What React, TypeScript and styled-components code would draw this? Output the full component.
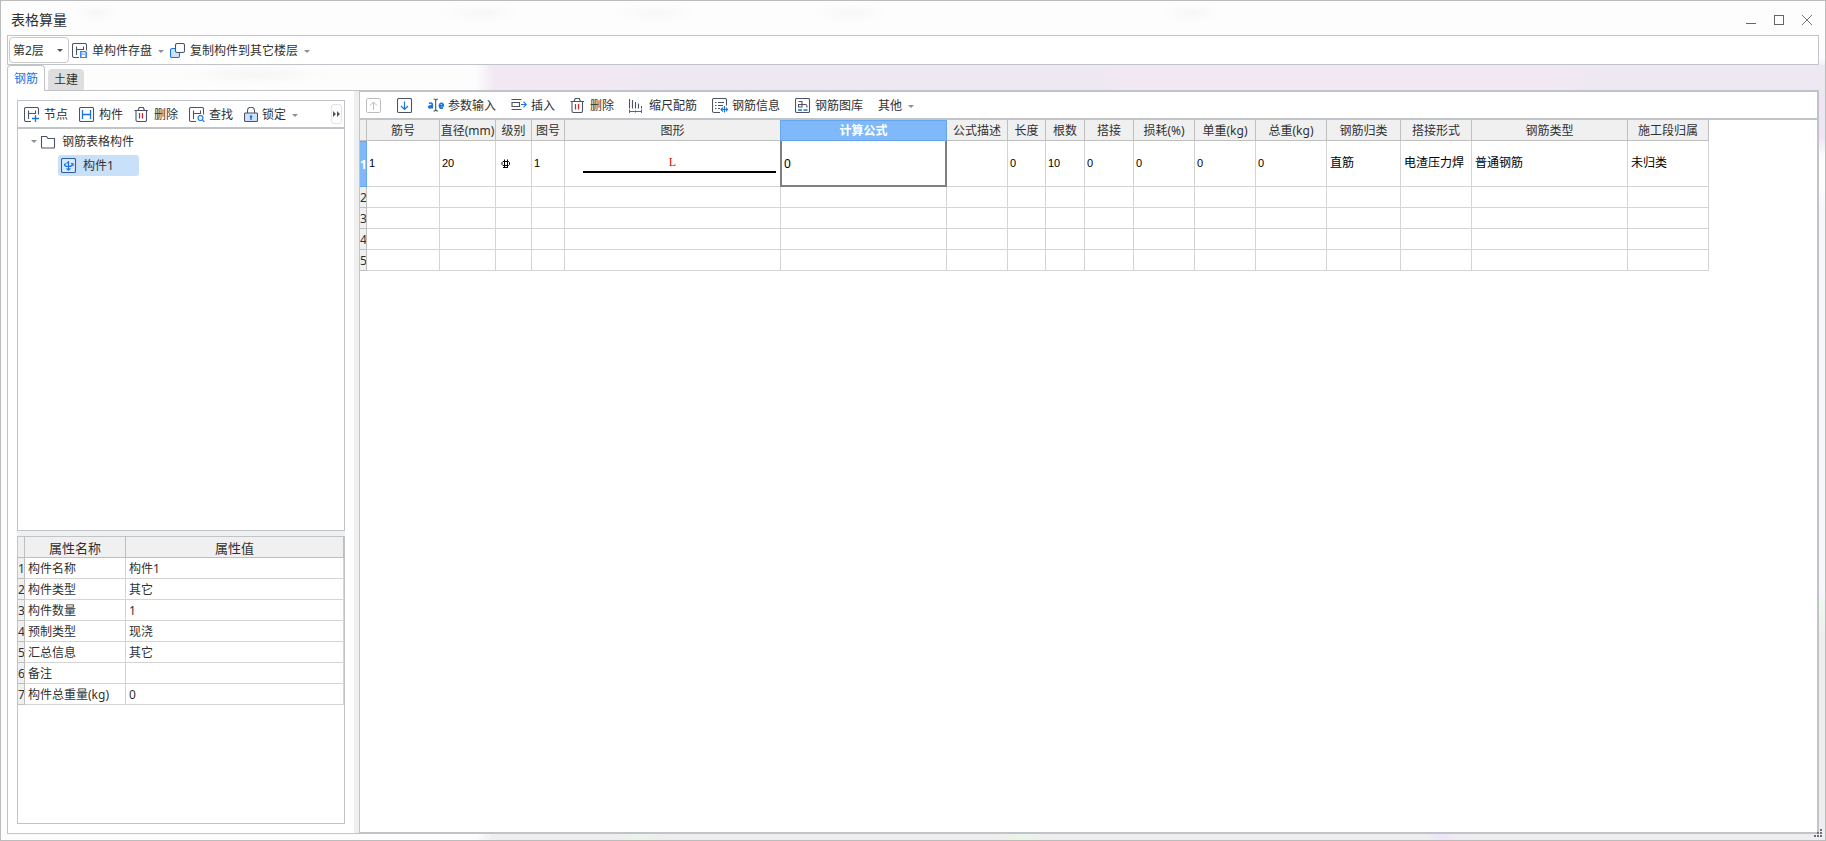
import React from "react";
import styled, { createGlobalStyle, css } from "styled-components";

const INK = "#4b5466";
const BLUE = "#1a73e0";
const EDGE = "#c0c3c8";
const GRID = "#d4d4d4";
const HEAD = "#f0f0f0";

const GlobalStyle = createGlobalStyle`
  *, *::before, *::after { box-sizing: border-box; }
  html, body { margin: 0; }
  body {
    color: #303133;
    background: #fff;
    font: 12px/16px "Noto Sans", "Noto Sans CJK SC", sans-serif;
  }
  button, select, input { font: inherit; color: inherit; margin: 0; }
`;

const Window = styled.div`
  position: relative;
  display: flex;
  flex-direction: column;
  min-height: 100vh;
  padding: 0 6px 6px;
  border: 1px solid #bcbcbc;
  background:
    linear-gradient(#ede6f2 0 44px, #fdfdfd 64px 90px, #f9f3fc 120px 500px, #ebf8eb 516px, #eeeeee 540px)
      right 0 top 92px / 6px 100% no-repeat,
    linear-gradient(90deg, #fdfdfd 26%, #eeeeee 27% 34%, #e8f6e8 35%, #eeeeee 36% 55%, #e8f6e8 56%, #eeeeee 57% 78%, #efe4fa 79%, #eeeeee 80%)
      0 100% / 100% 6px no-repeat,
    linear-gradient(90deg, transparent 26%, #f2e8f4 27% 33%, #eee8f2 36% 60%, #f2e8f4 62% 84%, #eee8f2 88%)
      0 64px / 100% 28px no-repeat,
    linear-gradient(#fdfdfd 0 56px, #f3eef6 64px 92px, transparent 92px) right 0 top 0 / 6px 92px no-repeat,
    radial-gradient(closest-side, #f6f6f7, transparent) 180px 62px / 150px 22px no-repeat,
    radial-gradient(closest-side, #f7f7f7, transparent) 70px 2px / 50px 20px no-repeat,
    radial-gradient(closest-side, #f7f7f7, transparent) 440px 2px / 80px 20px no-repeat,
    radial-gradient(closest-side, #f7f7f7, transparent) 615px 2px / 80px 20px no-repeat,
    radial-gradient(closest-side, #f7f7f7, transparent) 810px 2px / 80px 20px no-repeat,
    radial-gradient(closest-side, #f7f7f7, transparent) 1160px 2px / 60px 20px no-repeat,
    #fdfdfd;
`;

const TitleBar = styled.header`
  display: flex;
  align-items: center;
  justify-content: space-between;
  height: 34px;
  padding: 0 4px;
`;

const Title = styled.h1`
  margin: 0;
  padding-top: 4px;
  font-size: 14px;
  line-height: 20px;
  font-weight: 400;
`;

const WindowButtons = styled.div`
  display: flex;
  gap: 12px;
  padding-top: 4px;
`;

const WindowButton = styled.button`
  display: flex;
  padding: 0;
  border: 0;
  background: none;
`;

const FloorPicker = styled.label`
  position: relative;
  display: flex;
  margin-right: 3px;
`;

const FloorSelect = styled.select`
  appearance: none;
  width: 60px;
  height: 26px;
  padding: 1px 0 0 3px;
  border: 1px solid #c9c9c9;
  border-radius: 4px;
  background: #fff;
  outline: none;
`;

const Caret = styled.span<{ $dark?: boolean }>`
  border: 3px solid transparent;
  border-top-color: ${(p) => (p.$dark ? "#555" : "#8f8f8f")};
  border-bottom: 0;
`;

const PickerCaret = styled(Caret)`
  position: absolute;
  right: 6px;
  top: 12px;
  pointer-events: none;
`;

const ToolButton = styled.button`
  display: flex;
  align-items: center;
  gap: 4px;
  flex: none;
  padding: 2px 0 0;
  border: 0;
  background: none;
  white-space: nowrap;

  svg { flex: none; }
  ${Caret} { margin-left: 2px; }
`;

const MainToolbar = styled.div`
  display: flex;
  align-items: center;
  height: 30px;
  padding: 0 1px;
  border: 1px solid ${EDGE};
  background: #fff;

  ${ToolButton} + ${ToolButton} { margin-left: 6px; }
`;

const TabStrip = styled.div`
  display: flex;
  align-items: flex-end;
  gap: 3px;
  height: 25px;
`;

const Tab = styled.button<{ $active?: boolean }>`
  padding: 1px 6px 0;
  border: 0;
  border-radius: 4px 4px 0 0;
  height: 21px;
  background: #dedede;
  ${(p) =>
    p.$active &&
    css`
      position: relative;
      height: 26px;
      margin-bottom: -1px;
      border: 1px solid ${EDGE};
      border-bottom: 0;
      background: #fff;
      color: ${BLUE};
    `}
`;

const Body = styled.main`
  display: flex;
  flex: 1;
  min-height: 0;
`;

const Side = styled.aside`
  display: flex;
  flex-direction: column;
  flex: none;
  width: 347px;
  padding: 9px;
  border: solid ${EDGE};
  border-width: 1px 0 1px 1px;
  background: #fff;
`;

const Splitter = styled.div`
  flex: none;
  width: 5px;
  border: solid ${EDGE};
  border-width: 1px 0;
  background: #efefef;
`;

const SideToolbar = styled.div`
  display: flex;
  align-items: center;
  gap: 11px;
  height: 29px;
  padding: 0 2px 0 6px;
  border: 1px solid ${EDGE};
  border-bottom-width: 2px;
`;

const MoreButton = styled.button`
  display: flex;
  align-items: center;
  justify-content: center;
  width: 11px;
  height: 20px;
  margin-left: auto;
  padding: 0;
  border: 1px solid #e3e3e8;
  border-radius: 3px;
  background: #fff;
`;

const Tree = styled.ul`
  flex: 402 1 0;
  margin: 0;
  padding: 2px 13px;
  list-style: none;
  border: 1px solid ${EDGE};
  border-top: 0;

  ul { margin: 0; padding: 3px 0 0 27px; list-style: none; }
`;

const TreeNode = styled.div<{ $selected?: boolean }>`
  display: flex;
  align-items: center;
  gap: 6px;
  height: 21px;
  ${(p) =>
    p.$selected &&
    css`
      width: 81px;
      padding-left: 3px;
      border-radius: 3px;
      background: #c9e0fb;
    `}

  ${Caret} { margin-right: -3px; }
`;

const SideGap = styled.div`
  height: 5px;
  background: ${HEAD};
`;

const PropertyPanel = styled.section`
  flex: 290 1 0;
  border: 1px solid ${EDGE};
`;

const Grid = styled.table`
  table-layout: fixed;
  border-collapse: separate;
  border-spacing: 0;

  th, td {
    height: 21px;
    padding: 2px 0 0;
    overflow: hidden;
    border: solid ${GRID};
    border-width: 0 1px 1px 0;
    text-align: left;
    font-weight: 400;
    white-space: nowrap;
  }
  th {
    border-color: #bfbfbf;
    background: ${HEAD};
    text-align: center;
  }
  td { padding-left: 3px; }
`;

const PropertyGrid = styled(Grid)`
  width: 100%;
  thead th { font-size: 13px; }
`;

const Main = styled.section`
  display: flex;
  flex-direction: column;
  flex: 1;
  min-width: 0;
  border: 2px solid ${EDGE};
  border-left-width: 1px;
  background: #fff;
`;

const RebarToolbar = styled.div`
  display: flex;
  align-items: center;
  gap: 15px;
  height: 28px;
  padding: 0 6px;
  border-bottom: 2px solid ${EDGE};
`;

const GridScroll = styled.div`
  flex: 1;
  overflow: auto;
`;

const RebarGrid = styled(Grid)`
  width: 1349px;
`;

const HeadCell = styled.th<{ $active?: boolean }>`
  ${(p) =>
    p.$active &&
    css`
      &&& {
        background: #80b9fa;
        border-color: #66a6ee;
        color: #fff;
        font-weight: 700;
        box-shadow: -1px 0 0 #66a6ee, inset 0 1px 0 #66a6ee;
      }
    `}
`;

const DataCell = styled.td<{ $numeric?: boolean; $editing?: boolean }>`
  &&& {
    height: 46px;
    color: #000;
    font-family: "Liberation Sans", "Noto Sans CJK SC", sans-serif;
    font-size: ${(p) => (p.$numeric ? 11 : 12)}px;
    padding: 0 0 2px ${(p) => (p.$numeric ? 2 : 3)}px;
  }
  svg { display: block; margin: 2px 0 0 2px; }
  ${(p) =>
    p.$editing &&
    css`
      &&& {
        padding: 0 0 0 2px;
        overflow: visible;
        border: solid #7f7f7f;
        border-width: 0 2px 2px 1px;
        box-shadow: -1px 0 0 #7f7f7f;
      }
    `}
`;

const FormulaInput = styled.input`
  display: block;
  width: 100%;
  height: 20px;
  padding: 0;
  border: 0;
  outline: 0;
  background: none;
  font-family: "Noto Sans", sans-serif;
  font-size: 12px;
`;

const ShapeCell = styled(DataCell)`
  &&& { padding: 0 4px 0 0; text-align: center; }
`;

const ShapeLabel = styled.div`
  padding-left: 4px;
  color: #f00000;
  font-family: "Liberation Serif", serif;
  font-size: 12px;
  line-height: 14px;
`;

const ShapeBar = styled.div`
  height: 2px;
  margin: 2px 0 0 18px;
  background: #000;
`;

const Grip = styled.svg`
  position: absolute;
  right: 3px;
  bottom: 3px;
`;

const Svg = ({ children }: { children: React.ReactNode }) => (
  <svg width="16" height="16" viewBox="0 0 16 16" fill="none" stroke={INK} strokeWidth="1.1" aria-hidden="true">
    {children}
  </svg>
);

const OpenFrame = () => (
  <path d="M14.500 7.500V2A1.500 1.500 0 0 0 13 .5H2A1.500 1.500 0 0 0 .5 2v11A1.500 1.500 0 0 0 2 14.500h5M4.500 3.500v8.500M11.500 3.500v3.500M4.500 6.500h7" />
);

const SaveIcon = () => (
  <Svg>
    <OpenFrame />
    <path d="M8.500 8.500h5l1 1v5h-6z" fill="#8db9f5" stroke="#3f86e8" />
    <path d="M10 12h3v2h-3zM10 9.500h3v1h-3z" fill="#fff" stroke="none" />
  </Svg>
);
const CopyIcon = () => (
  <Svg>
    <rect x=".5" y="5.500" width="9" height="9" rx="1.600" fill="#cfe2fb" stroke={BLUE} />
    <rect x="5.500" y=".5" width="9" height="9" rx="1.600" fill="#fff" />
  </Svg>
);
const NodeIcon = () => (
  <Svg>
    <OpenFrame />
    <path d="M11.500 8v7M8 11.500h7" stroke={BLUE} strokeWidth="1.300" />
  </Svg>
);
const MemberIcon = () => (
  <Svg>
    <rect x=".5" y=".5" width="14" height="14" rx="1.300" />
    <path d="M3.500 3v9M11.500 3v9M3.500 7.500h8" stroke={BLUE} strokeWidth="1.300" />
  </Svg>
);
const TrashIcon = () => (
  <Svg>
    <path d="M.5 3.500h13.500M4 3.500L5.200.5h4.100l1.200 3M2 3.500V13a1.500 1.500 0 0 0 1.500 1.500H11a1.500 1.500 0 0 0 1.500-1.500V3.500" />
    <path d="M5.500 6v5.500M8.500 6v5.500" stroke="#e02020" strokeWidth="1.200" />
  </Svg>
);
const FindIcon = () => (
  <Svg>
    <OpenFrame />
    <circle cx="11.500" cy="11" r="2.500" stroke={BLUE} fill="#e6f0fd" />
    <path d="M13.400 12.900l2 2" stroke={BLUE} />
  </Svg>
);
const LockIcon = () => (
  <svg width="14" height="16" viewBox="0 0 14 16" fill="none" stroke={INK} strokeWidth="1.1" aria-hidden="true">
    <path d="M3.500 6V3.800a3.300 3.300 0 0 1 7 0V6" />
    <rect x=".5" y="6" width="13" height="8.500" rx="1" fill="#cfe2fb" />
    <path d="M7 9.500v3.500" stroke={BLUE} strokeWidth="1.400" />
    <circle cx="7" cy="9.500" r="1.300" fill={BLUE} stroke="none" />
  </svg>
);
const UpIcon = () => (
  <svg width="16" height="16" viewBox="0 0 16 16" fill="none" stroke="#bdbdbd" aria-hidden="true">
    <rect x=".5" y=".5" width="14" height="14" rx="1.300" />
    <path d="M7.500 12V4M4 7.500L7.500 4 11 7.500" />
  </svg>
);
const DownIcon = () => (
  <Svg>
    <rect x=".5" y=".5" width="14" height="14" rx="1.300" />
    <path d="M7.500 3.500v8M4 8l3.500 3.500L11 8" stroke={BLUE} strokeWidth="1.200" />
  </Svg>
);
const ParamIcon = () => (
  <Svg>
    <path
      d="M1 5.500q3-1.300 3.200.8v4.200M4.200 7.700q-3.400-.2-3.400 1.300T4.200 9.300M11.500 7.800h3.800q0-2.500-1.900-2.500t-1.900 2.500 2.100 2.400l1.400-.3"
      stroke={BLUE}
      strokeWidth="1.700"
    />
    <path d="M5.500 1q2.200 0 2.200 1.500v9q0 1.500-2.200 1.500M10 1Q7.700 1 7.700 2.500v9q0 1.500 2.300 1.500" />
  </Svg>
);
const InsertIcon = () => (
  <Svg>
    <path d="M.5 1.500h10M.5 11.500h10M1 4.500h7.500v4H1z" />
    <path d="M10 6.500h5M12.500 3.700l2.800 2.800-2.800 2.800" stroke={BLUE} />
  </Svg>
);
const ScaleIcon = () => (
  <Svg>
    <path d="M.5 1v9.500M3.500 2v8.500M6.500 4v6.500M9.500 5.500v5M12.500 8v2.500" />
    <path d="M0 13.500h13M.5 11.500v3.500M6.500 12.500v2M12.500 11.500v3.500" stroke={BLUE} />
  </Svg>
);
const InfoIcon = () => (
  <Svg>
    <path d="M14.500 7.500V2A1.500 1.500 0 0 0 13 .5H2A1.500 1.500 0 0 0 .5 2v11A1.500 1.500 0 0 0 2 14.500h6M3 4.500h1.500M6 4.500h6M3 7.500h1.500M6 7.500h5M3 10.500h1.500M6 10.500h2" />
    <path d="M12.500 8v6.500M9 11.500h6.500M11 9.500l-2 2 2 2M14 9.500l1.500 2-1.500 2" stroke={BLUE} />
  </Svg>
);
const LibraryIcon = () => (
  <Svg>
    <rect x=".5" y=".5" width="14" height="14" rx="1.300" />
    <path d="M3.500 3.500H7V9H3.500V6.500H7M7 6.500h3.500q1.500 0 1.500 3" />
    <path d="M3 12h4M8.500 12h4" stroke={BLUE} strokeWidth="1.300" />
  </Svg>
);
const FolderIcon = () => (
  <Svg>
    <path d="M1.500 12.500v-10h5l1.500 2h6.500v8.500a1 1 0 0 1-1 1h-11a1 1 0 0 1-1-1z" />
  </Svg>
);
const PieceIcon = () => (
  <Svg>
    <rect x=".5" y=".5" width="14" height="14" rx="1.300" stroke="#2c5f9e" fill="#d6e8fc" />
    <path
      d="M7.500 3v9M7.500 3.500Q6 4.500 5.800 5.500M3.500 6q-.5 2.500 4 2.500 3.500 0 4.500-2.500M10 5.500l2 .3.200 2M5.500 10.500l2 1.500 2-1.500M3.500 6.500l1.500-1"
      stroke={BLUE}
      strokeWidth="1.200"
    />
  </Svg>
);

const RebarGrade = () => (
  <svg width="10" height="10" viewBox="0 0 10 10" fill="none" stroke="#000" role="img" aria-label="三级钢筋">
    <path d="M2 2.500h5.500l1 1v2l-1 1H2l-1-1v-2zM3.500 .5v8M6.500 .5v8M2 8.500h5" />
  </svg>
);

const properties: [string, string][] = [
  ["构件名称", "构件1"],
  ["构件类型", "其它"],
  ["构件数量", "1"],
  ["预制类型", "现浇"],
  ["汇总信息", "其它"],
  ["备注", ""],
  ["构件总重量(kg)", "0"],
];

type Column = { name: string; width: number; value: string; kind?: "grade" | "shape" | "formula" };

const columns: Column[] = [
  { name: "筋号", width: 73, value: "1" },
  { name: "直径(mm)", width: 56, value: "20" },
  { name: "级别", width: 36, value: "", kind: "grade" },
  { name: "图号", width: 33, value: "1" },
  { name: "图形", width: 216, value: "L", kind: "shape" },
  { name: "计算公式", width: 166, value: "0", kind: "formula" },
  { name: "公式描述", width: 61, value: "" },
  { name: "长度", width: 38, value: "0" },
  { name: "根数", width: 39, value: "10" },
  { name: "搭接", width: 49, value: "0" },
  { name: "损耗(%)", width: 61, value: "0" },
  { name: "单重(kg)", width: 61, value: "0" },
  { name: "总重(kg)", width: 71, value: "0" },
  { name: "钢筋归类", width: 74, value: "直筋" },
  { name: "搭接形式", width: 71, value: "电渣压力焊" },
  { name: "钢筋类型", width: 156, value: "普通钢筋" },
  { name: "施工段归属", width: 81, value: "未归类" },
];

function RebarCell({ column }: { column: Column }) {
  switch (column.kind) {
    case "grade":
      return (
        <DataCell>
          <RebarGrade />
        </DataCell>
      );
    case "shape":
      return (
        <ShapeCell>
          <ShapeLabel>{column.value}</ShapeLabel>
          <ShapeBar />
        </ShapeCell>
      );
    case "formula":
      return (
        <DataCell $editing>
          <FormulaInput aria-label={column.name} defaultValue={column.value} />
        </DataCell>
      );
    default:
      return <DataCell $numeric={/^\d+$/.test(column.value)}>{column.value}</DataCell>;
  }
}

export default function App() {
  return (
    <>
      <GlobalStyle />
      <Window>
        <TitleBar>
          <Title>表格算量</Title>
          <WindowButtons>
            <WindowButton aria-label="最小化">
              <svg width="16" height="16" fill="none" stroke="#666">
                <path d="M3 11.500h10" />
              </svg>
            </WindowButton>
            <WindowButton aria-label="最大化">
              <svg width="16" height="16" fill="none" stroke="#666">
                <rect x="3.500" y="3.500" width="9" height="9" />
              </svg>
            </WindowButton>
            <WindowButton aria-label="关闭">
              <svg width="16" height="16" fill="none" stroke="#777">
                <path d="M3 3l10 10M13 3L3 13" />
              </svg>
            </WindowButton>
          </WindowButtons>
        </TitleBar>

        <MainToolbar>
          <FloorPicker>
            <FloorSelect aria-label="楼层" defaultValue="2">
              <option value="2">第2层</option>
            </FloorSelect>
            <PickerCaret $dark />
          </FloorPicker>
          <ToolButton>
            <SaveIcon />
            单构件存盘
            <Caret />
          </ToolButton>
          <ToolButton>
            <CopyIcon />
            复制构件到其它楼层
            <Caret />
          </ToolButton>
        </MainToolbar>

        <TabStrip role="tablist">
          <Tab $active role="tab" aria-selected="true">钢筋</Tab>
          <Tab role="tab" aria-selected="false">土建</Tab>
        </TabStrip>

        <Body>
          <Side>
            <SideToolbar>
              <ToolButton><NodeIcon />节点</ToolButton>
              <ToolButton><MemberIcon />构件</ToolButton>
              <ToolButton><TrashIcon />删除</ToolButton>
              <ToolButton><FindIcon />查找</ToolButton>
              <ToolButton><LockIcon />锁定<Caret /></ToolButton>
              <MoreButton aria-label="更多">
                <svg width="7" height="6" fill="#555">
                  <path d="M0 0l3 3-3 3zM4 0l3 3-3 3z" />
                </svg>
              </MoreButton>
            </SideToolbar>
            <Tree>
              <li>
                <TreeNode>
                  <Caret />
                  <FolderIcon />
                  钢筋表格构件
                </TreeNode>
                <ul>
                  <li>
                    <TreeNode $selected>
                      <PieceIcon />
                      构件1
                    </TreeNode>
                  </li>
                </ul>
              </li>
            </Tree>
            <SideGap />
            <PropertyPanel>
              <PropertyGrid>
                <colgroup>
                  <col width="7" />
                  <col width="101" />
                  <col />
                </colgroup>
                <thead>
                  <tr>
                    <th />
                    <th>属性名称</th>
                    <th>属性值</th>
                  </tr>
                </thead>
                <tbody>
                  {properties.map(([name, value], i) => (
                    <tr key={name}>
                      <th>{i + 1}</th>
                      <td>{name}</td>
                      <td>{value}</td>
                    </tr>
                  ))}
                </tbody>
              </PropertyGrid>
            </PropertyPanel>
          </Side>
          <Splitter />
          <Main>
            <RebarToolbar>
              <ToolButton aria-label="上移" disabled><UpIcon /></ToolButton>
              <ToolButton aria-label="下移"><DownIcon /></ToolButton>
              <ToolButton><ParamIcon />参数输入</ToolButton>
              <ToolButton><InsertIcon />插入</ToolButton>
              <ToolButton><TrashIcon />删除</ToolButton>
              <ToolButton><ScaleIcon />缩尺配筋</ToolButton>
              <ToolButton><InfoIcon />钢筋信息</ToolButton>
              <ToolButton><LibraryIcon />钢筋图库</ToolButton>
              <ToolButton>其他<Caret /></ToolButton>
            </RebarToolbar>
            <GridScroll>
              <RebarGrid>
                <colgroup>
                  <col width="7" />
                  {columns.map((c) => (
                    <col key={c.name} width={c.width} />
                  ))}
                </colgroup>
                <thead>
                  <tr>
                    <HeadCell />
                    {columns.map((c) => (
                      <HeadCell key={c.name} $active={c.kind === "formula"}>{c.name}</HeadCell>
                    ))}
                  </tr>
                </thead>
                <tbody>
                  <tr>
                    <HeadCell $active>1</HeadCell>
                    {columns.map((c) => (
                      <RebarCell key={c.name} column={c} />
                    ))}
                  </tr>
                  {[2, 3, 4, 5].map((n) => (
                    <tr key={n}>
                      <th>{n}</th>
                      {columns.map((c) => (
                        <td key={c.name} />
                      ))}
                    </tr>
                  ))}
                </tbody>
              </RebarGrid>
            </GridScroll>
          </Main>
        </Body>

        <Grip width="8" height="8" fill="#6b7078" aria-hidden="true">
          <path d="M6 0h2v2H6zM3 3h2v2H3zM6 3h2v2H6zM0 6h2v2H0zM3 6h2v2H3zM6 6h2v2H6z" />
        </Grip>
      </Window>
    </>
  );
}
